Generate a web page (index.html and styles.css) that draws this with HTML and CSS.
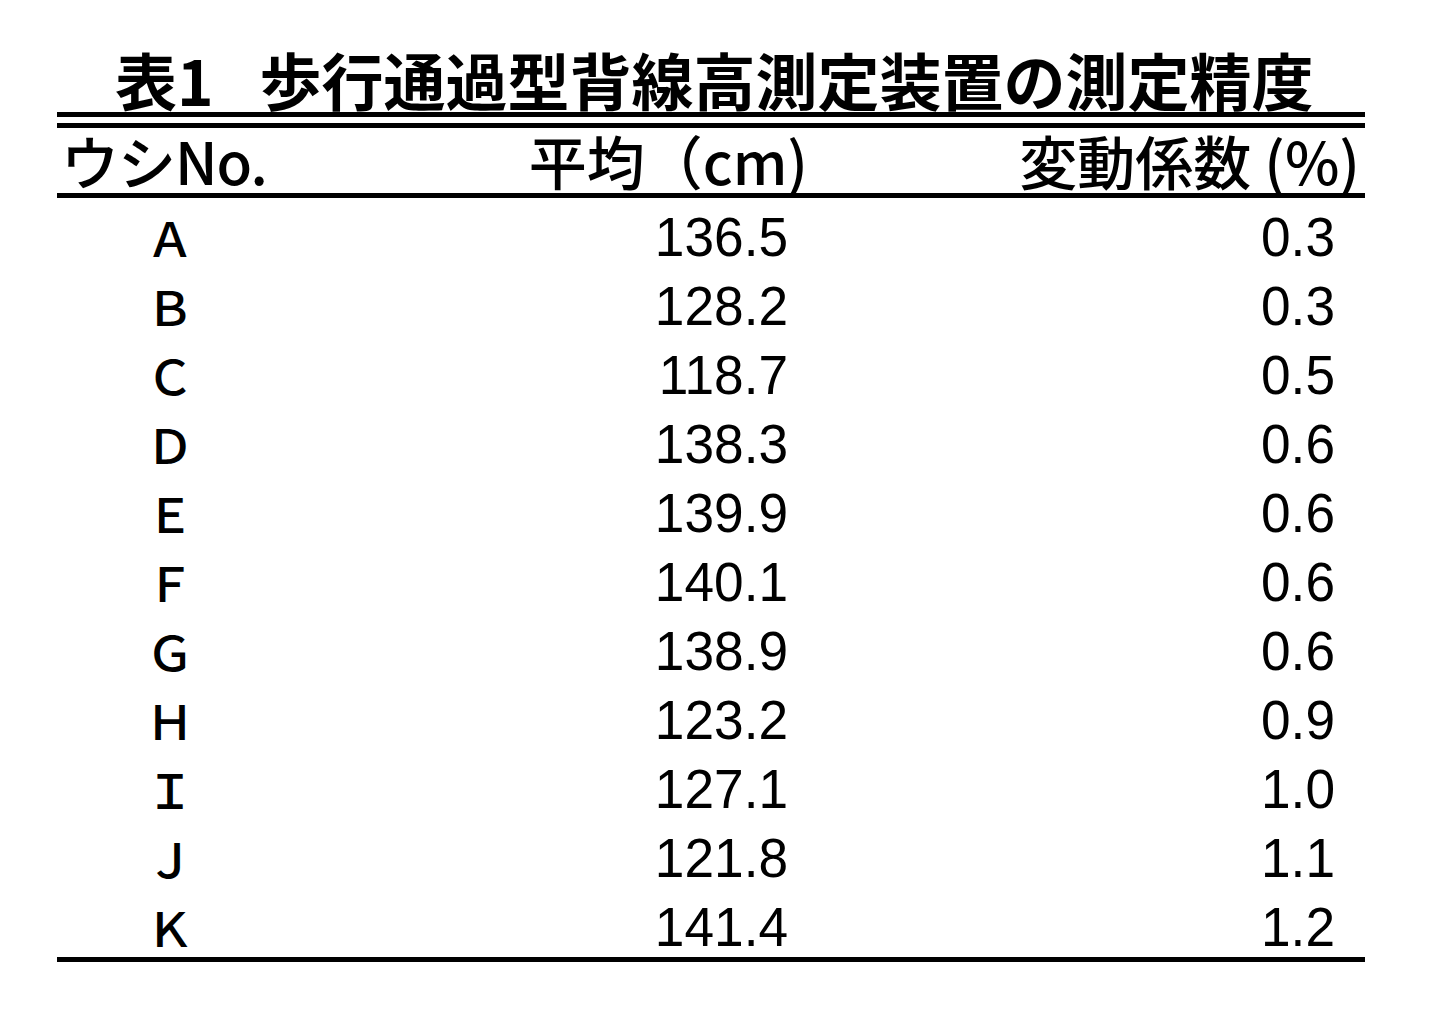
FILE: index.html
```html
<!DOCTYPE html>
<html lang="ja">
<head>
<meta charset="utf-8">
<title>表1 歩行通過型背線高測定装置の測定精度</title>
<link rel="stylesheet" href="styles.css">
</head>
<body>
<div class="page">
  <h1 class="title"><span class="tno">表1</span><span>歩行通過型背線高測定装置の測定精度</span></h1>
  <div class="rule"></div>
  <div class="rule rule-second"></div>
  <div class="head">
    <div class="h1c">ウシNo.</div>
    <div class="h2c">平均（cm)</div>
    <div class="h3c">変動係数 (%)</div>
  </div>
  <div class="rule"></div>
  <div class="rows">
    <div class="row"><div class="c1">Ａ</div><div class="c2">136.5</div><div class="c3">0.3</div></div>
    <div class="row"><div class="c1">Ｂ</div><div class="c2">128.2</div><div class="c3">0.3</div></div>
    <div class="row"><div class="c1">Ｃ</div><div class="c2">118.7</div><div class="c3">0.5</div></div>
    <div class="row"><div class="c1">Ｄ</div><div class="c2">138.3</div><div class="c3">0.6</div></div>
    <div class="row"><div class="c1">Ｅ</div><div class="c2">139.9</div><div class="c3">0.6</div></div>
    <div class="row"><div class="c1">Ｆ</div><div class="c2">140.1</div><div class="c3">0.6</div></div>
    <div class="row"><div class="c1">Ｇ</div><div class="c2">138.9</div><div class="c3">0.6</div></div>
    <div class="row"><div class="c1">Ｈ</div><div class="c2">123.2</div><div class="c3">0.9</div></div>
    <div class="row"><div class="c1">Ｉ</div><div class="c2">127.1</div><div class="c3">1.0</div></div>
    <div class="row"><div class="c1">Ｊ</div><div class="c2">121.8</div><div class="c3">1.1</div></div>
    <div class="row"><div class="c1">Ｋ</div><div class="c2">141.4</div><div class="c3">1.2</div></div>
  </div>
  <div class="rule rule-bottom"></div>
</div>
</body>
</html>
```
FILE: styles.css
```css
html, body {
  margin: 0;
  padding: 0;
  background: #ffffff;
}
body {
  color: #000;
  font-family: "Noto Sans CJK JP", "Liberation Sans", sans-serif;
}
.page {
  margin-left: 57px;
  width: 1308px;
  padding-top: 48px;
}
.title {
  margin: 0 0 0 58px;
  height: 64px;
  font-size: 62px;
  line-height: 62px;
  font-weight: 700;
  display: flex;
  white-space: nowrap;
  letter-spacing: 0;
}
.tno {
  margin-right: 46px;
}
.rule {
  height: 5px;
  background: #000;
}
.rule-second {
  margin-top: 6px;
}
.head {
  display: grid;
  grid-template-columns: 226px 525px 552px 5px;
  height: 65px;
  align-items: center;
  font-size: 58px;
  line-height: 65px;
  font-weight: 500;
  white-space: nowrap;
}
.h1c {
  padding-left: 4px;
  letter-spacing: -1px;
}
.h2c {
  text-align: right;
}
.h3c {
  text-align: right;
}
.rows {
  padding-top: 4px;
}
.row {
  display: grid;
  grid-template-columns: 226px 505px 547px 30px;
  height: 69px;
  align-items: center;
  line-height: 69px;
}
.c1 {
  text-align: center;
  font-family: "Noto Sans CJK JP", sans-serif;
  font-size: 48px;
  font-weight: 500;
}
.c2, .c3 {
  text-align: right;
  font-family: "Liberation Sans", Arial, sans-serif;
  font-size: 56px;
  transform: scaleX(0.95);
  transform-origin: right center;
}
.rule-bottom {
  margin-top: -4px;
}
```
